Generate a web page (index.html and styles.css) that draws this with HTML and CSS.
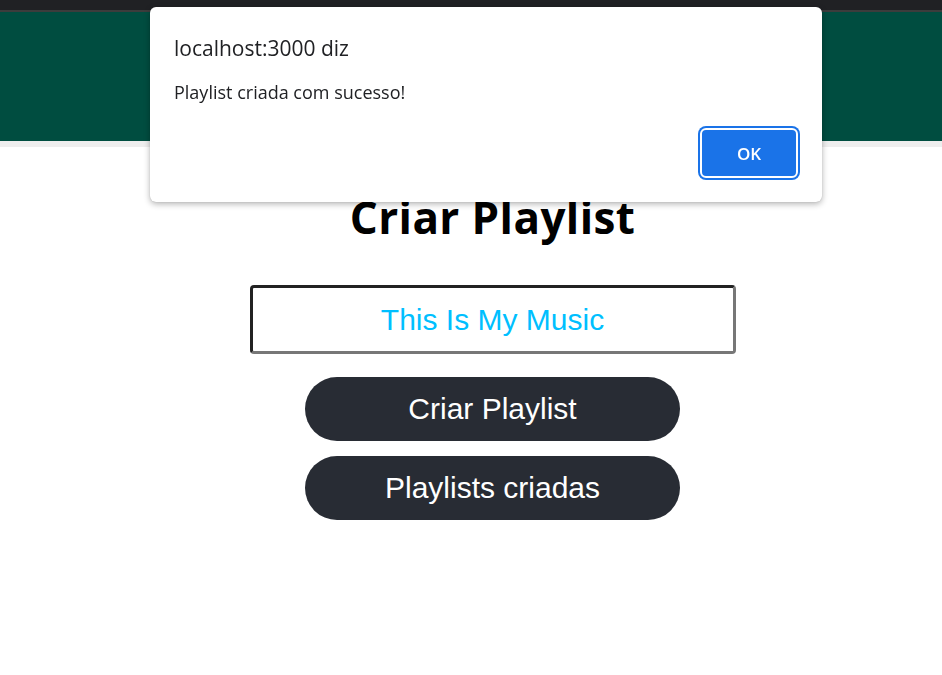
FILE: index.html
```html
<!DOCTYPE html>
<html lang="pt-BR">
<head>
<meta charset="utf-8">
<title>Criar Playlist</title>
<link rel="stylesheet" href="styles.css">
</head>
<body>
<div class="chrome-bar"></div>
<div class="chrome-line"></div>
<header class="app-header"></header>
<div class="header-strip"></div>
<main class="main">
  <h1 class="title">Criar Playlist</h1>
  <input class="name-input" type="text" value="This Is My Music">
  <button class="pill-btn" type="button">Criar Playlist</button>
  <button class="pill-btn" type="button">Playlists criadas</button>
</main>

<div class="alert" role="alertdialog">
  <div class="alert-title">localhost:3000 diz</div>
  <div class="alert-msg">Playlist criada com sucesso!</div>
  <div class="alert-actions">
    <button class="alert-ok" type="button">OK</button>
  </div>
</div>
</body>
</html>
```
FILE: styles.css
```css
html, body {
  margin: 0;
  padding: 0;
  background: #ffffff;
  width: 942px;
  height: 675px;
  overflow: hidden;
}

.chrome-bar {
  height: 10px;
  background: #202124;
}

.chrome-line {
  height: 2px;
  background: #3c3c3c;
}

.app-header {
  height: 129px;
  background: #004d40;
}

.header-strip {
  height: 6px;
  background: #eeeeee;
}

.main {
  display: flex;
  flex-direction: column;
  align-items: center;
  padding-top: 46px;
  padding-left: 43px;
}

.title {
  margin: 0;
  font-family: "Open Sans", "Noto Sans", sans-serif;
  font-weight: 700;
  font-size: 44px;
  line-height: 48px;
  letter-spacing: 0.4px;
  color: #000;
}

.name-input {
  box-sizing: border-box;
  margin-top: 44px;
  width: 486px;
  height: 69px;
  border: 3px solid;
  border-color: #222222 #777777 #777777 #222222;
  border-radius: 4px;
  font-family: "Liberation Sans", Arial, sans-serif;
  font-size: 30px;
  color: #00bfff;
  text-align: center;
  padding: 0;
  outline: none;
  background: #fff;
}

.pill-btn {
  box-sizing: border-box;
  width: 375px;
  height: 64px;
  margin-top: 15px;
  border: none;
  border-radius: 32px;
  background: #282c34;
  color: #ffffff;
  font-family: "Liberation Sans", Arial, sans-serif;
  font-size: 30px;
  padding: 0;
}

.name-input + .pill-btn {
  margin-top: 23px;
}

.alert {
  position: fixed;
  left: 150px;
  top: 7px;
  width: 672px;
  height: 195px;
  box-sizing: border-box;
  background: #ffffff;
  border-radius: 6px;
  box-shadow: 0 2px 6px rgba(0, 0, 0, 0.3), 0 0 1px rgba(0, 0, 0, 0.25);
  padding: 28px 24px 0 24px;
  font-family: "Open Sans", "Noto Sans", sans-serif;
  color: #202124;
}

.alert-title {
  font-size: 21px;
  line-height: 26px;
}

.alert-msg {
  margin-top: 19px;
  font-size: 18px;
  line-height: 24px;
}

.alert-actions {
  display: flex;
  justify-content: flex-end;
  margin-top: 24px;
}

.alert-ok {
  box-sizing: border-box;
  width: 98px;
  height: 50px;
  background: #1a73e8;
  color: #ffffff;
  border: 2px solid #ffffff;
  border-radius: 6px;
  box-shadow: 0 0 0 2px #1a73e8;
  font-family: "Open Sans", "Noto Sans", sans-serif;
  font-weight: 600;
  font-size: 17px;
  padding: 0;
}
```
